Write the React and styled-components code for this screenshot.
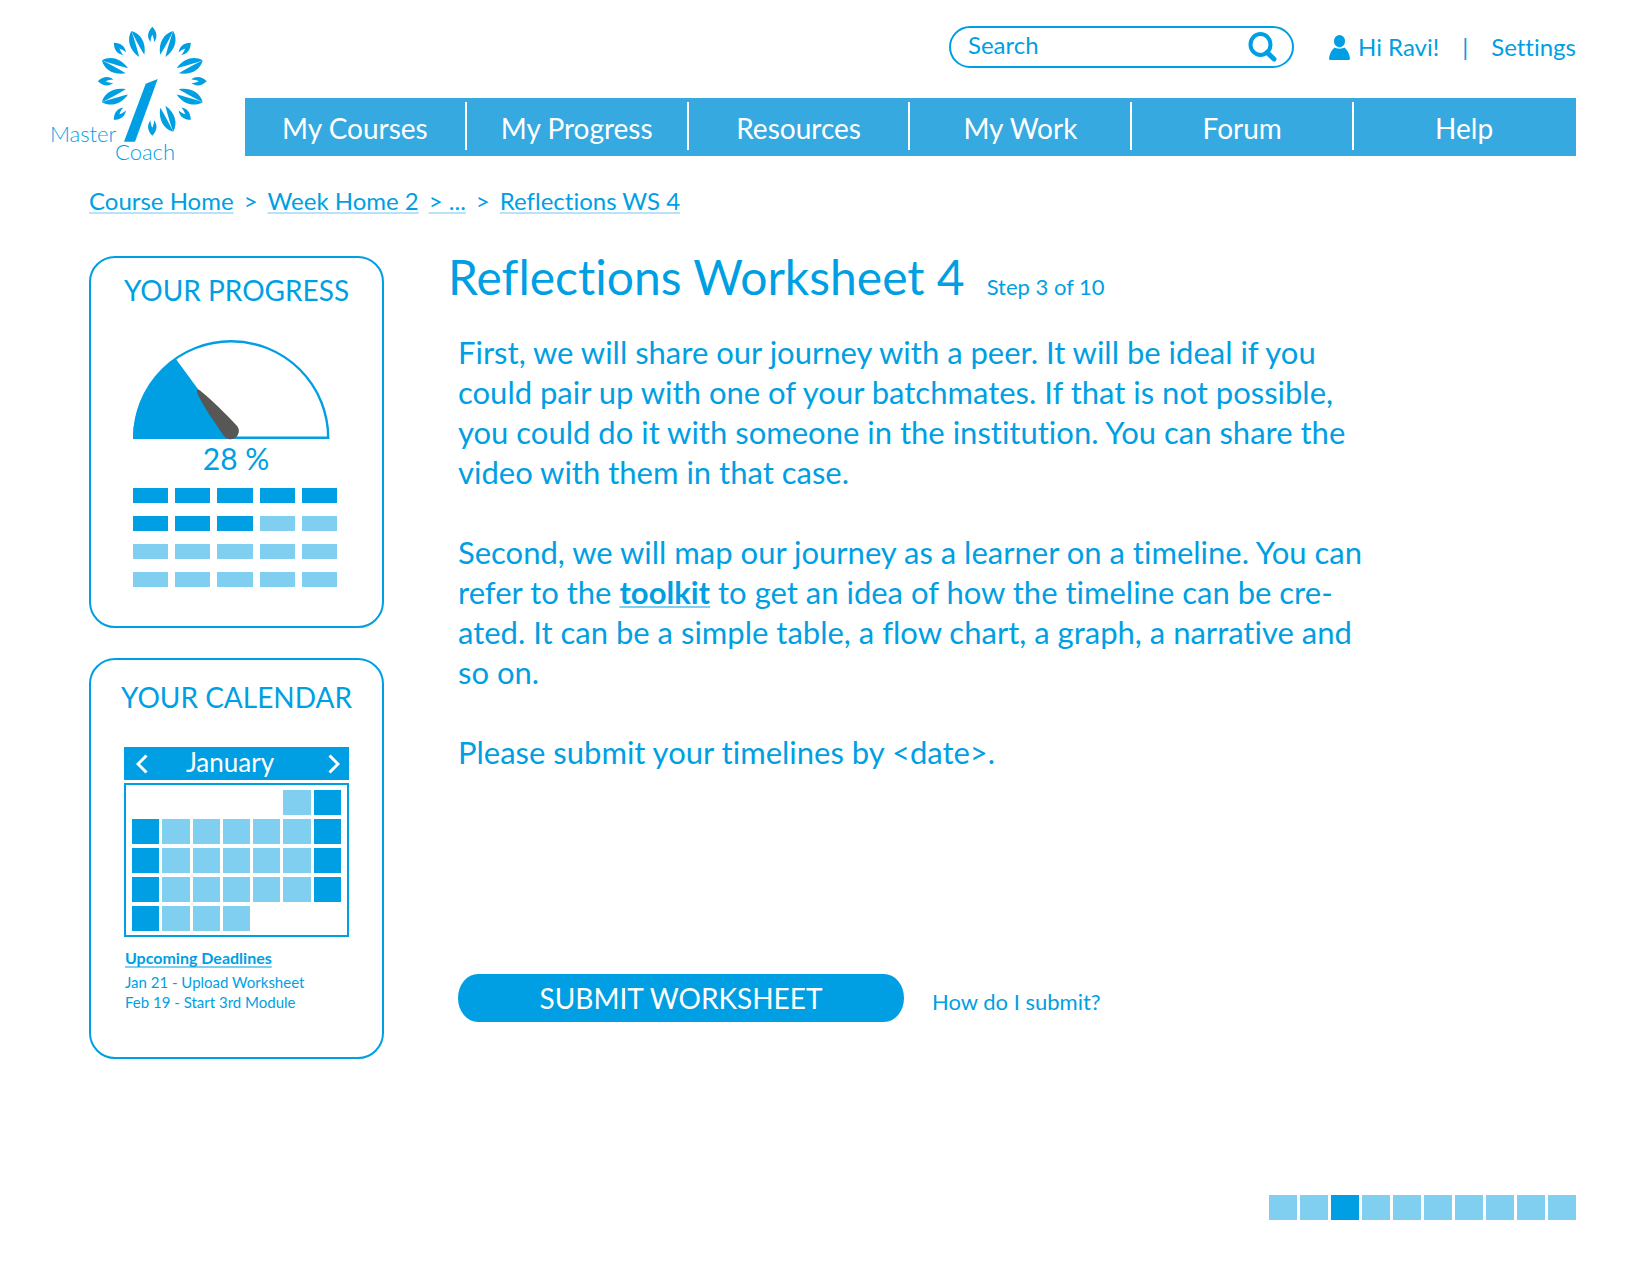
import React from 'react';
import styled, { createGlobalStyle } from 'styled-components';

const blue = '#009fe3';
const pale = '#80cff1';
const line = '#b8e3f7';

const GlobalStyle = createGlobalStyle`
  *, *::before, *::after { box-sizing: border-box; }
  body {
    margin: 0;
    background: #ffffff;
    color: ${blue};
    font-family: Lato, "Open Sans", sans-serif;
    font-variant-ligatures: none;
  }
  h1, h2, h3, p, ul, ol { margin: 0; padding: 0; font-weight: 400; }
  ul, ol { list-style: none; }
  a { color: inherit; text-decoration: none; }
  button { border: 0; padding: 0; background: none; color: inherit; font: inherit; cursor: pointer; }
`;

const Page = styled.div`
  padding: 26px 74px 56px 0;
`;

const Header = styled.header`
  display: flex;
  align-items: flex-start;
`;

const LogoLink = styled.a`
  flex: none;
  width: 194px;
  padding-left: 50px;
  svg { display: block; overflow: visible; }
`;

const LogoText = styled.text`
  font-family: Lato, "Open Sans", sans-serif;
  font-weight: 300;
  font-size: 22px;
  fill: ${blue};
`;

const HeaderBody = styled.div`
  flex: 1;
  margin-left: 51px;
`;

const TopRow = styled.div`
  display: flex;
  justify-content: flex-end;
  align-items: center;
  gap: 35px;
`;

const SearchForm = styled.form`
  display: flex;
  align-items: center;
  width: 345px;
  height: 42px;
  padding: 0 14px 0 17px;
  border: 2px solid ${blue};
  border-radius: 21px;
`;

const SearchInput = styled.input`
  flex: 1;
  min-width: 0;
  padding: 0 0 4px;
  border: 0;
  outline: 0;
  background: transparent;
  font: 400 24px/28px Lato, "Open Sans", sans-serif;
  color: ${blue};
  &::placeholder { color: ${blue}; opacity: 1; }
`;

const IconButton = styled.button`
  display: flex;
`;

const Account = styled.div`
  display: flex;
  align-items: center;
  justify-content: space-between;
  min-width: 247px;
  font-size: 24px;
  line-height: 28px;
`;

const Greeting = styled.a`
  display: flex;
  align-items: center;
  gap: 8px;
`;

const MainNav = styled.nav`
  margin-top: 30px;
  background: #36a9e1;
  ul { display: grid; grid-template-columns: repeat(6, 1fr); }
  li { padding: 4px 0 6px; }
`;

const NavLink = styled.a`
  display: block;
  border-right: 2px solid ${(p) => (p.$last ? 'transparent' : '#ffffff')};
  color: #ffffff;
  font-size: 28px;
  line-height: 48px;
  padding-top: 2px;
  height: 48px;
  text-align: center;
`;

const Breadcrumb = styled.nav`
  margin: 23px 0 0 89px;
  ol { display: flex; gap: 10px; }
  font-size: 24px;
  line-height: 28px;
`;

const UnderlinedLink = styled.a`
  font-weight: ${(p) => (p.$bold ? 700 : 400)};
  text-decoration: underline 2px ${(p) => (p.$bold ? pale : line)};
  text-underline-offset: 2px;
  text-decoration-skip-ink: none;
`;

const Content = styled.div`
  display: flex;
  align-items: flex-start;
  gap: 64px;
  margin: 41px 0 0 89px;
`;

const Sidebar = styled.aside`
  flex: none;
  width: 295px;
  display: flex;
  flex-direction: column;
  gap: 30px;
`;

const Card = styled.section`
  border: 2px solid ${blue};
  border-radius: 26px;
  padding: ${(p) => p.$top}px 33px ${(p) => p.$bottom}px;
`;

const CardTitle = styled.h2`
  margin: 0 -10px;
  font-size: 28px;
  line-height: 36px;
  white-space: nowrap;
  text-align: center;
`;

const GaugeBox = styled.figure`
  display: flex;
  flex-direction: column;
  align-items: center;
  margin: 32px 10px 0 9px;
  svg { display: block; align-self: flex-start; }
  figcaption { font-size: 30px; line-height: 32px; }
`;

const BarGrid = styled.div`
  display: grid;
  grid-template-columns: repeat(5, 1fr);
  gap: 13px 7px;
  margin: 14px 12px 0 9px;
`;

const Bar = styled.span`
  height: 15px;
  background: ${(p) => (p.$done ? blue : pale)};
`;

const MonthBar = styled.div`
  display: flex;
  align-items: center;
  justify-content: space-between;
  height: 33px;
  margin-top: 32px;
  padding: 0 9px 0 12px;
  background: ${blue};
  color: #ffffff;
  font-size: 26px;
  line-height: 30px;
`;

const MonthName = styled.span`
  padding: 0 16px 4px 0;
`;

const MonthGrid = styled.div`
  display: grid;
  grid-template-columns: repeat(7, 1fr);
  grid-auto-rows: 25px;
  gap: 4px 3px;
  margin-top: 3px;
  padding: 5px 6px 4px;
  border: 2px solid ${blue};
`;

const Day = styled.span`
  grid-column-start: ${(p) => p.$start || 'auto'};
  background: ${(p) => (p.$weekend ? blue : pale)};
`;

const Deadlines = styled.div`
  margin: 11px 0 0 1px;
  font-size: 15px;
  line-height: 20px;
  h3 { font-size: 16px; line-height: 20px; margin-bottom: 4px; }
`;

const Main = styled.main`
  flex: 1;
  min-width: 0;
`;

const TitleRow = styled.div`
  display: flex;
  align-items: baseline;
  gap: 22px;
  padding-top: 1px;
  h1 { font-size: 48px; line-height: 40px; }
  span { font-size: 22px; line-height: 28px; }
`;

const Copy = styled.div`
  display: flex;
  flex-direction: column;
  gap: 40px;
  margin: 31px 0 0 10px;
  font-size: 31px;
  line-height: 40px;
`;

const Actions = styled.div`
  display: flex;
  align-items: center;
  gap: 28px;
  margin: 202px 0 0 10px;
  font-size: 22px;
  line-height: 28px;
`;

const SubmitButton = styled.button`
  width: 446px;
  height: 48px;
  border-radius: 20px / 24px;
  background: ${blue};
  color: #ffffff;
  font-size: 28px;
`;

const HelpLink = styled.a`
  padding-top: 8px;
`;

const Steps = styled.nav`
  margin-top: 136px;
  ol { display: flex; justify-content: flex-end; gap: 3px; }
  a {
    display: block;
    width: 28px;
    height: 25px;
    background: ${pale};
  }
  a[aria-current] { background: ${blue}; }
`;

const LARGE_LEAVES = [22.5, 67.5, 112.5, 157.5, 247.5, 292.5, 337.5];
const SMALL_LEAVES = [0, 45, 90, 135, 180, 225, 270, 315];

function Logo() {
  return (
    <svg width="160" height="138" viewBox="50 26 160 138" role="img" aria-label="Master Coach">
      <g transform="translate(152.3 81.3)" fill={blue}>
        {LARGE_LEAVES.map((a) => (
          <g key={a} transform={`rotate(${a})`}>
            <path d="M0 -54.5C-7.500 -49 -9.500 -38 -2.800 -27.500C-1.800 -33 -1.200 -40 -0.300 -49Z" />
            <path d="M0 -54.5C7.500 -49 9.500 -38 2.800 -27.500C1.800 -33 1.200 -40 0.300 -49Z" />
          </g>
        ))}
        {SMALL_LEAVES.map((a) => (
          <path
            key={a}
            transform={`rotate(${a})`}
            d="M0 -54.5C-5 -49 -5.500 -44 -1.800 -39C-1.800 -42 -1 -44.500 0 -46.500C1 -44.500 1.800 -42 1.800 -39C5.500 -44 5 -49 0 -54.5Z"
          />
        ))}
      </g>
      <path fill={blue} d="M145.7 83.7L157.7 79L135 141.7H124Z" />
      <LogoText x="50" y="142">Master</LogoText>
      <LogoText x="115" y="160">Coach</LogoText>
    </svg>
  );
}

function SearchIcon() {
  return (
    <svg width="30" height="30" viewBox="0 0 30 30" fill="none" stroke={blue}>
      <ellipse cx="12.5" cy="12.5" rx="10" ry="10.5" strokeWidth="4" />
      <path d="M19 20.5L26 27" strokeWidth="5" strokeLinecap="round" />
    </svg>
  );
}

function PersonIcon() {
  return (
    <svg width="21" height="25" viewBox="0 0 21 25" fill={blue}>
      <ellipse cx="10.5" cy="6.2" rx="5.5" ry="6.2" />
      <path d="M5.5 12.5C7 14 14 14 15.500 12.500C18.500 15 20.500 19 21 23.500Q21 25 19.500 25H1.500Q0 25 0 23.500C0.500 19 2.500 15 5.500 12.500Z" />
    </svg>
  );
}

function Chevron({ right }) {
  return (
    <svg width="12" height="20" viewBox="0 0 12 20" fill="none" stroke="#ffffff" strokeWidth="3">
      <path d={right ? 'M1.500 1.500L10 10L1.500 18.500' : 'M10.500 1.500L2 10L10.500 18.500'} />
    </svg>
  );
}

function Gauge() {
  return (
    <svg width="197" height="102" viewBox="0 0 197 102" role="img" aria-label="28 percent complete">
      <path d="M1.200 97.700A97 96.500 0 0 1 195.200 97.700Z" fill="#ffffff" stroke={blue} strokeWidth="2.400" />
      <path d="M0 98.500A98 98 0 0 1 42.500 18.500L98 94V98.500Z" fill={blue} />
      <path d="M64.500 49.500C63.500 50.500 64 53 65.500 56C72 69 81 81 90.500 95.500A8 8 0 1 0 104.500 86.500C93 74 80 61 67 50.500Q65.500 49 64.500 49.500Z" fill="#575756" />
    </svg>
  );
}

const NAV = ['My Courses', 'My Progress', 'Resources', 'My Work', 'Forum', 'Help'];
const DONE = 8;
const DAYS = Array.from({ length: 27 }, (_, i) => i);

function isWeekend(i) {
  const column = (i + 5) % 7;
  return column === 0 || column === 6;
}

export default function App() {
  return (
    <>
      <GlobalStyle />
      <Page>
        <Header>
          <LogoLink href="#home"><Logo /></LogoLink>
          <HeaderBody>
            <TopRow>
              <SearchForm role="search" onSubmit={(e) => e.preventDefault()}>
                <SearchInput type="text" placeholder="Search" aria-label="Search" />
                <IconButton type="submit" aria-label="Search"><SearchIcon /></IconButton>
              </SearchForm>
              <Account>
                <Greeting href="#profile"><PersonIcon />Hi Ravi!</Greeting>
                <span>|</span>
                <a href="#settings">Settings</a>
              </Account>
            </TopRow>
            <MainNav aria-label="Main">
              <ul>
                {NAV.map((label, i) => (
                  <li key={label}>
                    <NavLink href="#nav" $last={i === NAV.length - 1}>{label}</NavLink>
                  </li>
                ))}
              </ul>
            </MainNav>
          </HeaderBody>
        </Header>

        <Breadcrumb aria-label="Breadcrumb">
          <ol>
            <li><UnderlinedLink href="#course">Course Home</UnderlinedLink></li>
            <li>&gt;</li>
            <li><UnderlinedLink href="#week">Week Home 2</UnderlinedLink></li>
            <li><UnderlinedLink href="#more">&gt; ...</UnderlinedLink></li>
            <li>&gt;</li>
            <li><UnderlinedLink href="#ws4">Reflections WS 4</UnderlinedLink></li>
          </ol>
        </Breadcrumb>

        <Content>
          <Sidebar>
            <Card $top={14} $bottom={39}>
              <CardTitle>YOUR PROGRESS</CardTitle>
              <GaugeBox>
                <Gauge />
                <figcaption>28 %</figcaption>
              </GaugeBox>
              <BarGrid>
                {Array.from({ length: 20 }, (_, i) => <Bar key={i} $done={i < DONE} />)}
              </BarGrid>
            </Card>
            <Card $top={19} $bottom={45}>
              <CardTitle>YOUR CALENDAR</CardTitle>
              <MonthBar>
                <IconButton type="button" aria-label="Previous month"><Chevron /></IconButton>
                <MonthName>January</MonthName>
                <IconButton type="button" aria-label="Next month"><Chevron right /></IconButton>
              </MonthBar>
              <MonthGrid>
                {DAYS.map((i) => (
                  <Day key={i} $start={i === 0 ? 6 : undefined} $weekend={isWeekend(i)} />
                ))}
              </MonthGrid>
              <Deadlines>
                <h3><UnderlinedLink href="#deadlines" $bold>Upcoming Deadlines</UnderlinedLink></h3>
                <p>Jan 21 - Upload Worksheet</p>
                <p>Feb 19 - Start 3rd Module</p>
              </Deadlines>
            </Card>
          </Sidebar>

          <Main>
            <TitleRow>
              <h1>Reflections Worksheet 4</h1>
              <span>Step 3 of 10</span>
            </TitleRow>
            <Copy>
              <p>
                First, we will share our journey with a peer. It will be ideal if you<br />
                could pair up with one of your batchmates. If that is not possible,<br />
                you could do it with someone in the institution. You can share the<br />
                video with them in that case.
              </p>
              <p>
                Second, we will map our journey as a learner on a timeline. You can<br />
                refer to the <UnderlinedLink href="#toolkit" $bold>toolkit</UnderlinedLink> to get an idea of how the timeline can be cre-<br />
                ated. It can be a simple table, a flow chart, a graph, a narrative and<br />
                so on.
              </p>
              <p>Please submit your timelines by &lt;date&gt;.</p>
            </Copy>
            <Actions>
              <SubmitButton type="button">SUBMIT WORKSHEET</SubmitButton>
              <HelpLink href="#help">How do I submit?</HelpLink>
            </Actions>
          </Main>
        </Content>

        <Steps aria-label="Steps">
          <ol>
            {Array.from({ length: 10 }, (_, i) => (
              <li key={i}>
                <a href="#step" aria-label={`Step ${i + 1}`} aria-current={i === 2 ? 'step' : undefined} />
              </li>
            ))}
          </ol>
        </Steps>
      </Page>
    </>
  );
}
